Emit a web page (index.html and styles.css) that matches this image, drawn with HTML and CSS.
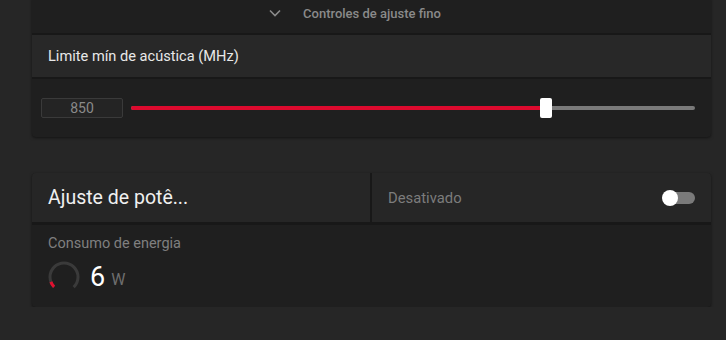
FILE: index.html
```html
<!DOCTYPE html>
<html lang="pt">
<head>
	<meta charset="UTF-8">
	<title>Ajuste</title>
	<link rel="stylesheet" href="styles.css">
</head>
<body>
	<div class="page">
		<div class="card tune">
			<div class="tune-head">
				<svg class="chev" width="12" height="8" viewBox="0 0 12 8"><path d="M1 1.5 L6 6.5 L11 1.5" fill="none" stroke="#8a8a8a" stroke-width="1.6"/></svg>
				<span>Controles de ajuste fino</span>
			</div>
			<div class="row-title">Limite mín de acústica (MHz)</div>
			<div class="slider-row">
				<div class="num-box">850</div>
				<div class="track">
					<div class="fill"></div>
					<div class="thumb"></div>
				</div>
			</div>
		</div>

		<div class="card power">
			<div class="power-top">
				<div class="power-name">Ajuste de potê...</div>
				<div class="power-state">
					<span>Desativado</span>
					<div class="toggle"><div class="knob"></div></div>
				</div>
			</div>
			<div class="power-body">
				<div class="label">Consumo de energia</div>
				<div class="reading">
					<svg class="gauge" width="34" height="34" viewBox="0 0 34 34">
						<circle cx="17" cy="17" r="14" fill="none" stroke="#3a3a3a" stroke-width="3" stroke-dasharray="66 88" transform="rotate(135 17 17)"/>
						<circle cx="17" cy="17" r="14" fill="none" stroke="#e0102f" stroke-width="3" stroke-dasharray="6 88" transform="rotate(135 17 17)"/>
					</svg>
					<span class="val">6</span>
					<span class="unit">W</span>
				</div>
			</div>
		</div>
	</div>
</body>
</html>
```

FILE: styles.css
```css
body{margin:0;background-color:#262626;font-family:Roboto,"Liberation Sans",sans-serif;}
.page{padding:0 15px 0 32px;display:flex;flex-direction:column;gap:36px;}
.card{background-color:#1f1f1f;border-radius:4px;box-shadow:0 1px 3px rgba(0,0,0,.5);overflow:hidden;}
.tune{margin-top:-4px;}

.tune-head{height:37px;padding:0 33px 3px 0;box-sizing:border-box;display:flex;justify-content:center;align-items:center;gap:22px;
	color:#8a8a8a;font-size:13px;font-weight:500;}
.row-title{height:42px;background-color:#282828;border-top:2px solid #181818;border-bottom:2px solid #181818;
	display:flex;align-items:center;padding-left:16px;color:#e8e8e8;font-size:14.6px;}
.slider-row{height:58px;display:flex;align-items:center;padding:0 16px 0 9px;gap:8px;}
.num-box{width:80px;height:18px;border:1px solid #3a3a3a;border-radius:2px;background-color:#242424;
	color:#8a8a8a;font-size:14px;text-align:center;line-height:18px;}
.track{flex:1;height:4px;background-color:#7a7a7a;border-radius:2px;position:relative;}
.fill{width:73.4%;height:100%;background-color:#dc0a2e;border-radius:2px 0 0 2px;}
.thumb{position:absolute;left:72.5%;top:-8px;width:12px;height:20px;background-color:#fff;border-radius:2px;}

.power-top{display:flex;height:49px;background-color:#262626;border-bottom:3px solid #181818;}
.power-name{width:340px;border-right:2px solid #181818;display:flex;align-items:center;padding-left:16px;
	box-sizing:border-box;color:#f0f0f0;font-size:19.5px;}
.power-state{flex:1;display:flex;align-items:center;justify-content:space-between;padding:0 16px;color:#7c7c7c;font-size:14.8px;}
.toggle{width:32px;height:12px;border-radius:6px;background-color:#7a7a7a;position:relative;}
.knob{position:absolute;left:-1px;top:-2px;width:16px;height:16px;border-radius:50%;background-color:#fff;}

.power-body{height:82px;padding:10px 16px 0;box-sizing:border-box;}
.label{color:#7f7f7f;font-size:14.5px;}
.reading{display:flex;align-items:center;margin-top:8px;}
.gauge{margin-left:-1px;}
.val{color:#fff;font-size:27px;margin-left:9px;}
.unit{color:#6e6e6e;font-size:16px;margin-left:6px;margin-top:4px;}
```
